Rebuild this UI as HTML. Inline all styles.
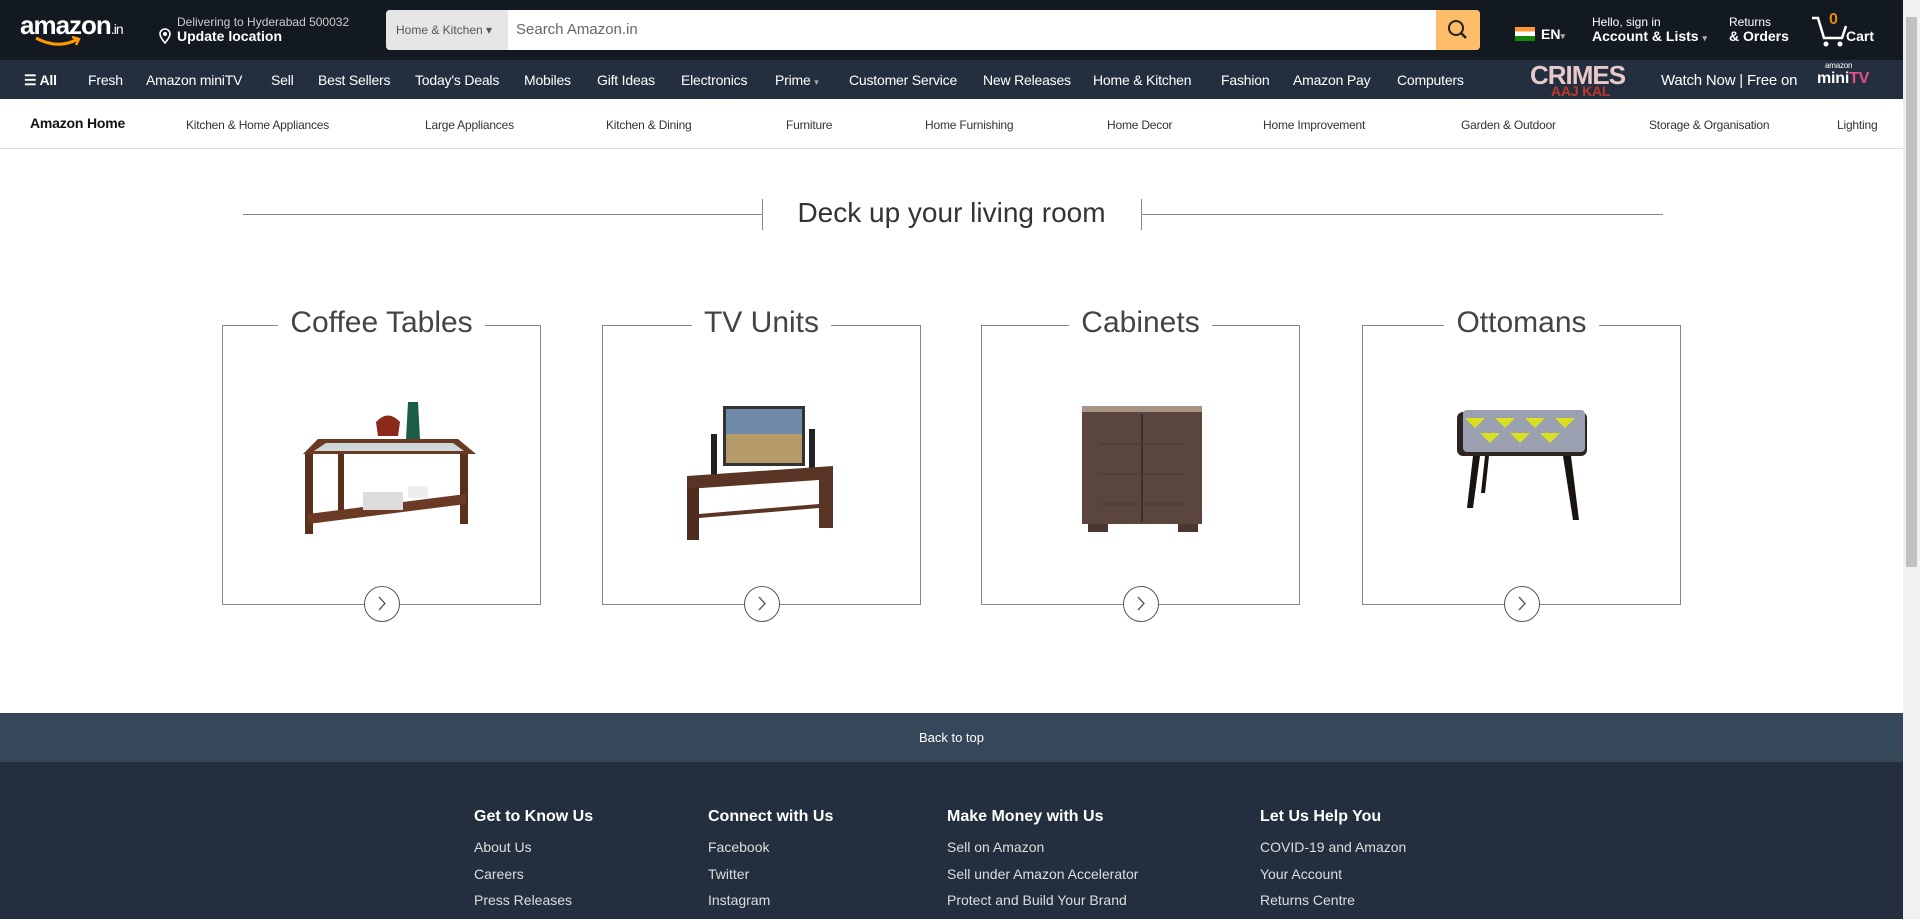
<!DOCTYPE html>
<html><head><meta charset="utf-8">
<style>
*{margin:0;padding:0;box-sizing:border-box}
body{width:1920px;height:919px;overflow:hidden;background:#fff;font-family:"Liberation Sans",Arial,sans-serif;position:relative}
.a{position:absolute;white-space:nowrap}
#hdr{position:absolute;left:0;top:0;width:1903px;height:60px;background:#131921}
#nav{position:absolute;left:0;top:60px;width:1903px;height:39px;background:#232f3e}
#nav .a{color:#fff;font-size:14px;top:12px;letter-spacing:-0.2px}
#sub{position:absolute;left:0;top:99px;width:1903px;height:50px;border-bottom:1px solid #ddd;background:#fff}
#sub .a{font-size:12px;color:#333;top:19px;letter-spacing:-0.2px}
.card{position:absolute;top:325px;width:319px;height:280px;border:1.5px solid #888}
.ct{position:absolute;top:-20px;left:0;width:100%;text-align:center;font-size:30px;color:#444}
.ct span{background:#fff;padding:0 12px}
.circ{position:absolute;bottom:-18px;left:50%;margin-left:-18px;width:36px;height:36px;border-radius:50%;border:1.5px solid #555;background:#fff}
#btt{position:absolute;left:0;top:713px;width:1903px;height:49px;background:#37475a;color:#fff;font-size:13px;text-align:center;line-height:49px}
#ft{position:absolute;left:0;top:762px;width:1903px;height:157px;background:#232f3e}
.fh{color:#fff;font-weight:bold;font-size:16px;top:46px}
.fl{color:#ddd;font-size:14px}
#sb{position:absolute;left:1903px;top:0;width:17px;height:919px;background:#f1f1f1}
#sb div{position:absolute;left:3px;top:17px;width:11px;height:550px;background:#c1c1c1}
</style></head><body>
<div id="hdr">
 <div class="a" style="left:20px;top:10px;color:#fff;font-size:26px;font-weight:bold;letter-spacing:-1px">amazon<span style="font-size:14px;font-weight:normal">.in</span></div>
 <svg class="a" style="left:34px;top:36px" width="48" height="12"><path d="M2 2 Q24 14 44 3" stroke="#f90" stroke-width="3" fill="none"/><path d="M38 1 L45 3 L42 9" stroke="#f90" stroke-width="2.5" fill="none"/></svg>
 <svg class="a" style="left:159px;top:28px" width="12" height="16"><path d="M6 15 C1 9 1 7 1 6 A5 5 0 0 1 11 6 C11 7 11 9 6 15Z" stroke="#fff" stroke-width="1.6" fill="none"/><circle cx="6" cy="6" r="2" fill="#fff"/></svg>
 <div class="a" style="left:177px;top:15px;color:#ccc;font-size:12px">Delivering to Hyderabad 500032</div>
 <div class="a" style="left:177px;top:28px;color:#fff;font-size:14px;font-weight:bold">Update location</div>
 <div class="a" style="left:386px;top:10px;width:1094px;height:40px;background:#fff;border-radius:4px;overflow:hidden">
  <div style="position:absolute;left:0;top:0;width:122px;height:40px;background:#e6e6e6;color:#555;font-size:12px;line-height:40px;padding-left:10px">Home &amp; Kitchen ▾</div>
  <div style="position:absolute;left:130px;top:11px;color:#666;font-size:15px">Search Amazon.in</div>
  <div style="position:absolute;right:0;top:0;width:44px;height:40px;background:#febd69"><svg width="44" height="40"><circle cx="20" cy="18" r="7" stroke="#222" stroke-width="2" fill="none"/><path d="M25 23 L30 28" stroke="#222" stroke-width="2.5"/></svg></div>
 </div>
 <div class="a" style="left:1515px;top:27px;width:20px;height:14px;background:linear-gradient(#f93 33%,#fff 33%,#fff 66%,#138808 66%)"></div>
 <div class="a" style="left:1541px;top:26px;color:#fff;font-size:14px;font-weight:bold">EN<span style="font-size:9px;color:#aaa">▾</span></div>
 <div class="a" style="left:1592px;top:15px;color:#fff;font-size:12px">Hello, sign in</div>
 <div class="a" style="left:1592px;top:28px;color:#fff;font-size:14px;font-weight:bold">Account &amp; Lists <span style="font-size:9px;color:#aaa">▾</span></div>
 <div class="a" style="left:1729px;top:15px;color:#fff;font-size:12px">Returns</div>
 <div class="a" style="left:1729px;top:28px;color:#fff;font-size:14px;font-weight:bold">&amp; Orders</div>
 <svg class="a" style="left:1810px;top:14px" width="40" height="34"><path d="M2 4 L8 4 L14 24 L32 24 L36 12" stroke="#fff" stroke-width="2.5" fill="none"/><circle cx="16" cy="30" r="2.5" fill="#fff"/><circle cx="30" cy="30" r="2.5" fill="#fff"/></svg>
 <div class="a" style="left:1829px;top:11px;color:#f08804;font-size:16px;font-weight:bold">0</div>
 <div class="a" style="left:1846px;top:28px;color:#fff;font-size:14px;font-weight:bold">Cart</div>
</div>
<div id="nav">
 <div class="a" style="left:24px;font-weight:bold">☰ All</div>
 <div class="a" style="left:88px">Fresh</div>
 <div class="a" style="left:146px">Amazon miniTV</div>
 <div class="a" style="left:271px">Sell</div>
 <div class="a" style="left:318px">Best Sellers</div>
 <div class="a" style="left:415px">Today's Deals</div>
 <div class="a" style="left:524px">Mobiles</div>
 <div class="a" style="left:597px">Gift Ideas</div>
 <div class="a" style="left:681px">Electronics</div>
 <div class="a" style="left:775px">Prime <span style="font-size:9px;color:#aaa">▾</span></div>
 <div class="a" style="left:849px">Customer Service</div>
 <div class="a" style="left:983px">New Releases</div>
 <div class="a" style="left:1093px">Home &amp; Kitchen</div>
 <div class="a" style="left:1221px">Fashion</div>
 <div class="a" style="left:1293px">Amazon Pay</div>
 <div class="a" style="left:1397px">Computers</div>
 <div class="a" style="left:1530px;top:0px;font-size:26px;color:#e8c8c8;font-weight:900;letter-spacing:-1px">CRIMES</div>
 <div class="a" style="left:1551px;top:23px;font-size:14px;color:#c0392b;font-weight:900">AAJ KAL</div>
 <div class="a" style="left:1661px;font-size:15px">Watch Now | Free on</div>
 <div class="a" style="left:1825px;top:1px;font-size:8px">amazon</div>
 <div class="a" style="left:1817px;top:10px;font-size:16px;font-weight:bold">mini<span style="color:#e4508a">TV</span></div>
</div>
<div id="sub">
 <div class="a" style="left:30px;top:16px;font-size:14px;font-weight:bold;color:#111">Amazon Home</div>
 <div class="a" style="left:186px">Kitchen &amp; Home Appliances</div>
 <div class="a" style="left:425px">Large Appliances</div>
 <div class="a" style="left:606px">Kitchen &amp; Dining</div>
 <div class="a" style="left:786px">Furniture</div>
 <div class="a" style="left:925px">Home Furnishing</div>
 <div class="a" style="left:1107px">Home Decor</div>
 <div class="a" style="left:1263px">Home Improvement</div>
 <div class="a" style="left:1461px">Garden &amp; Outdoor</div>
 <div class="a" style="left:1649px">Storage &amp; Organisation</div>
 <div class="a" style="left:1837px">Lighting</div>
</div>
<div class="a" style="left:243px;top:214px;width:519px;height:1px;background:#888"></div>
<div class="a" style="left:762px;top:199px;width:1px;height:31px;background:#888"></div>
<div class="a" style="left:1141px;top:199px;width:1px;height:31px;background:#888"></div>
<div class="a" style="left:1141px;top:214px;width:522px;height:1px;background:#888"></div>
<div class="a" style="left:762px;top:197px;width:379px;text-align:center;font-size:28px;color:#333">Deck up your living room</div>

<div class="card" style="left:222px"><div class="ct"><span>Coffee Tables</span></div><div class="circ"><svg width="33" height="33"><path d="M14 10 L20 16.5 L14 23" stroke="#555" stroke-width="1.3" fill="none"/></svg></div>
<svg style="position:absolute;left:55px;top:68px" width="210" height="160"><path d="M40 45 L180 45 L198 60 L25 60Z" fill="#6b3a24"/><path d="M48 49 L175 49 L186 57 L36 57Z" fill="#cfd8d8"/><rect x="27" y="60" width="8" height="80" fill="#5a2f1c"/><rect x="182" y="60" width="8" height="70" fill="#5a2f1c"/><rect x="60" y="60" width="6" height="60" fill="#5a2f1c"/><path d="M30 120 L188 100 L188 110 L30 130Z" fill="#6b3a24"/><rect x="85" y="98" width="40" height="18" fill="#ddd"/><rect x="130" y="92" width="20" height="12" fill="#eee"/><path d="M130 8 L140 8 L142 45 L128 45Z" fill="#1b5e45"/><path d="M98 28 Q110 15 122 28 L120 42 L100 42Z" fill="#8b2a1a"/></svg></div>

<div class="card" style="left:602px"><div class="ct"><span>TV Units</span></div><div class="circ"><svg width="33" height="33"><path d="M14 10 L20 16.5 L14 23" stroke="#555" stroke-width="1.3" fill="none"/></svg></div>
<svg style="position:absolute;left:78px;top:78px" width="160" height="140"><rect x="42" y="2" width="82" height="60" fill="#333"/><rect x="45" y="5" width="76" height="54" fill="#b59a6a"/><rect x="45" y="5" width="76" height="25" fill="#6f8aa8"/><rect x="30" y="30" width="6" height="45" fill="#222"/><rect x="128" y="25" width="6" height="48" fill="#222"/><path d="M6 72 L152 62 L152 75 L6 85Z" fill="#5a3525"/><rect x="6" y="84" width="12" height="52" fill="#4e2d1f"/><rect x="138" y="74" width="14" height="50" fill="#5a3525"/><path d="M18 110 L138 100 L138 104 L18 114Z" fill="#5a3525"/></svg></div>

<div class="card" style="left:981px"><div class="ct"><span>Cabinets</span></div><div class="circ"><svg width="33" height="33"><path d="M14 10 L20 16.5 L14 23" stroke="#555" stroke-width="1.3" fill="none"/></svg></div>
<svg style="position:absolute;left:98px;top:78px" width="125" height="132"><rect x="2" y="2" width="120" height="8" fill="#a89484"/><rect x="2" y="8" width="120" height="112" fill="#5a463c"/><rect x="8" y="120" width="20" height="8" fill="#4a3830"/><rect x="98" y="120" width="20" height="8" fill="#4a3830"/><path d="M62 10 L62 118" stroke="#3e2f28" stroke-width="2"/><path d="M20 40 H105 M20 70 H105 M20 100 H105" stroke="#4a3a32"/></svg></div>

<div class="card" style="left:1362px"><div class="ct"><span>Ottomans</span></div><div class="circ"><svg width="33" height="33"><path d="M14 10 L20 16.5 L14 23" stroke="#555" stroke-width="1.3" fill="none"/></svg></div>
<svg style="position:absolute;left:92px;top:82px" width="135" height="125"><rect x="2" y="4" width="130" height="44" rx="6" fill="#2e2420"/><rect x="8" y="2" width="122" height="42" rx="4" fill="#9aa0b0"/><path d="M10 10 l10 10 l10 -10 M40 10 l10 10 l10 -10 M70 10 l10 10 l10 -10 M100 10 l10 10 l10 -10 M25 25 l10 10 l10 -10 M55 25 l10 10 l10 -10 M85 25 l10 10 l10 -10" fill="#d8e020"/><path d="M18 48 L12 100 L18 100 L25 48Z M108 48 L118 112 L124 112 L116 48Z M30 48 L26 85 L30 85 L34 48Z" fill="#1a1410"/></svg></div>

<div id="btt">Back to top</div>
<div id="ft">
 <div class="a fh" style="left:474px;top:46px">Get to Know Us</div>
 <div class="a fh" style="left:708px;top:46px">Connect with Us</div>
 <div class="a fh" style="left:947px;top:46px">Make Money with Us</div>
 <div class="a fh" style="left:1260px;top:46px">Let Us Help You</div>
 <div class="a fl" style="left:474px;top:77px">About Us</div>
 <div class="a fl" style="left:474px;top:104px">Careers</div>
 <div class="a fl" style="left:474px;top:130px">Press Releases</div>
 <div class="a fl" style="left:708px;top:77px">Facebook</div>
 <div class="a fl" style="left:708px;top:104px">Twitter</div>
 <div class="a fl" style="left:708px;top:130px">Instagram</div>
 <div class="a fl" style="left:947px;top:77px">Sell on Amazon</div>
 <div class="a fl" style="left:947px;top:104px">Sell under Amazon Accelerator</div>
 <div class="a fl" style="left:947px;top:130px">Protect and Build Your Brand</div>
 <div class="a fl" style="left:1260px;top:77px">COVID-19 and Amazon</div>
 <div class="a fl" style="left:1260px;top:104px">Your Account</div>
 <div class="a fl" style="left:1260px;top:130px">Returns Centre</div>
</div>
<div id="sb"><div></div></div>
</body></html>
